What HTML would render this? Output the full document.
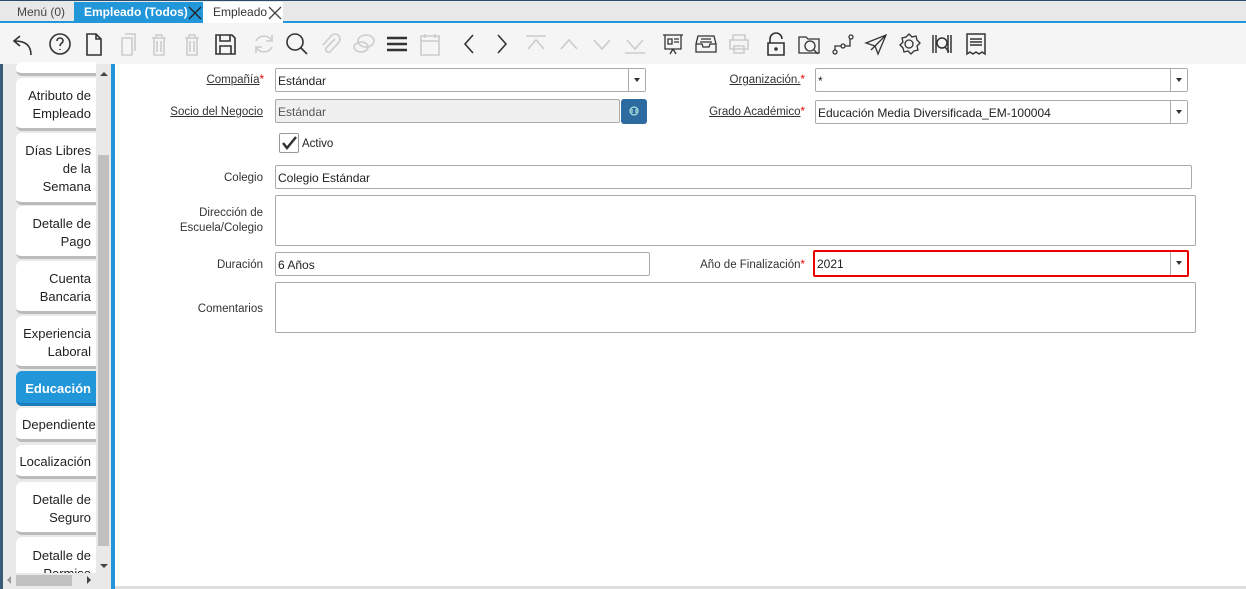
<!DOCTYPE html>
<html><head><meta charset="utf-8"><style>
*{box-sizing:border-box;margin:0;padding:0}
body{width:1246px;height:589px;overflow:hidden;background:#fff;font-family:"Liberation Sans",sans-serif;font-size:12px;color:#222;position:relative}
.abs{position:absolute}
.tabbar{left:0;top:0;width:1246px;height:23px;background:#e8e8e8;border-top:1px solid #2a4a6a;border-bottom:2px solid #2196d8}
.tab{top:3px;height:18px;font-size:12px;line-height:18px;padding-left:10px}
.tb{left:0;top:23px;width:1246px;height:41px;background:#f5f5f5}
.side{left:0;top:64px;width:111px;height:525px;background:#e9e9e9;border-left:3px solid #3a5a7a}
.vline{left:111px;top:64px;width:4px;height:525px;background:#2196d8}
.st{left:16px;width:80px;background:#fff;border-radius:6px 0 0 6px;border-bottom:3px solid #bbb;text-align:right;padding-right:5px;padding-top:3px;font-size:13px;line-height:18px;color:#222;display:flex;flex-direction:column;justify-content:center;align-items:flex-end;overflow:hidden;white-space:nowrap}
.lbl{font-size:11.5px;text-align:right;color:#333}
.u{text-decoration:underline}
.req{color:#e00}
.in{border:1px solid #aaa;background:#fff;font-size:12px;padding-left:2px;padding-top:1px;line-height:22px;border-radius:2px}
.dd{position:absolute;right:0;top:0;width:17px;height:100%;border-left:1px solid #aaa;background:#fff}
.dd:after{content:"";position:absolute;left:5px;top:9px;border-left:3px solid transparent;border-right:3px solid transparent;border-top:4px solid #333}
svg.i{position:absolute;top:31px;width:26px;height:26px;fill:none;stroke:#333;stroke-width:1.6}
.g{stroke:#ccc!important}
</style></head><body>
<div class="abs tabbar"></div>
<div class="abs tab" style="left:7px;width:66px;background:#e8e8e8;color:#444">Menú (0)</div>
<div class="abs tab" style="left:74px;width:129px;top:2px;height:21px;background:#2196d8;color:#fff;font-weight:bold;line-height:20px">Empleado (Todos)</div>
<svg class="abs" style="left:188px;top:6px" width="14" height="14"><path d="M1 1L13 13M13 1L1 13" stroke="#222" stroke-width="1.3"/></svg>
<div class="abs tab" style="left:203px;width:80px;top:2px;height:21px;background:#fff;color:#333;line-height:20px">Empleado</div>
<svg class="abs" style="left:268px;top:6px" width="14" height="14"><path d="M1 1L13 13M13 1L1 13" stroke="#444" stroke-width="1.3"/></svg>
<div class="abs tb"></div>
<svg class="i" style="left:9px"><path d="M22 24C22 14 16 10 6 10M11 5L5 10L11 15"/></svg>
<svg class="i" style="left:47px"><circle cx="13" cy="13" r="10"/><path d="M10 10c0-4 6-4 6 0c0 2-3 2-3 5M13 18v1"/></svg>
<svg class="i" style="left:81px"><path d="M6 3h9l5 5v16H6zM15 3v5h5"/></svg>
<svg class="i g" style="left:114px"><path d="M8 7h10v17H8zM11 3h10v17"/></svg>
<svg class="i g" style="left:146px"><path d="M6 7h14M10 7V4h6v3M8 7v17h10V7M11 10v11M15 10v11"/></svg>
<svg class="i g" style="left:179px"><path d="M6 7h14M10 7V4h6v3M8 7v17h10V7M11 10v11M15 10v11"/></svg>
<svg class="i" style="left:212px"><path d="M4 4h16l3 3v16H4zM8 4v6h10V4M8 23v-8h11v8"/></svg>
<svg class="i g" style="left:251px"><path d="M21 10a9 9 0 0 0-16 0M5 16a9 9 0 0 0 16 0M21 4v6h-6M5 22v-6h6"/></svg>
<svg class="i" style="left:284px"><circle cx="11" cy="11" r="8"/><path d="M17 17l6 6"/></svg>
<svg class="i g" style="left:317px"><path d="M18 8L9 17a3 3 0 0 0 4 4l9-10a5 5 0 0 0-7-7L6 14"/></svg>
<svg class="i g" style="left:351px"><ellipse cx="15" cy="10" rx="8" ry="6"/><ellipse cx="10" cy="16" rx="7" ry="5"/></svg>
<svg class="i" style="left:384px;stroke-width:2.5"><path d="M3 7h20M3 13h20M3 19h20"/></svg>
<svg class="i g" style="left:417px"><path d="M4 5h18v19H4zM4 10h18M8 3v4M18 3v4"/></svg>
<svg class="i" style="left:456px"><path d="M17 4L9 13l8 9"/></svg>
<svg class="i" style="left:489px"><path d="M9 4l8 9-8 9"/></svg>
<svg class="i g" style="left:523px"><path d="M3 5h20M5 18l8-9 8 9"/></svg>
<svg class="i g" style="left:556px"><path d="M5 18l8-9 8 9"/></svg>
<svg class="i g" style="left:589px"><path d="M5 9l8 9 8-9"/></svg>
<svg class="i g" style="left:622px"><path d="M3 22h20M5 9l8 9 8-9"/></svg>
<svg class="i" style="left:660px;stroke-width:1.3"><path d="M3 4h20M5 4v14h16V4M8 8h4v5H8zM14 8h5M14 11h5M13 18l-3 5M13 18l3 5"/></svg>
<svg class="i" style="left:693px;stroke-width:1.3"><path d="M5 5h16l2 8v8H3v-8zM3 13h6l1 3h6l1-3h6M8 8h10M7 11h12"/></svg>
<svg class="i g" style="left:726px"><path d="M7 9V4h12v5M4 9h18v9H4zM8 15h10v7H8z"/></svg>
<svg class="i" style="left:763px"><path d="M7 12V8a6 6 0 0 1 12 0M5 12h16v12H5z"/><circle cx="13" cy="18" r="1"/></svg>
<svg class="i" style="left:796px;stroke-width:1.3"><path d="M3 6h7l2 2h11v14H3z"/><circle cx="14" cy="15" r="5"/><path d="M18 19l4 4"/></svg>
<svg class="i" style="left:830px;stroke-width:1.3"><circle cx="5" cy="21" r="2"/><circle cx="13" cy="15" r="2"/><circle cx="21" cy="6" r="2"/><path d="M5 19v-4h6M15 15h5V8"/></svg>
<svg class="i" style="left:863px;stroke-width:1.3"><path d="M3 12L23 4 15 23 12 15zM12 15l11-11M8 19l4-4"/></svg>
<svg class="i" style="left:896px;stroke-width:1.3"><circle cx="13" cy="13" r="4"/><path d="M13 3l3 3 4-1 1 4 3 3-3 3 1 4-4 1-3 3-3-3-4 1-1-4-3-3 3-3-1-4 4-1z"/></svg>
<svg class="i" style="left:929px;stroke-width:1.5"><path d="M4 4v18M7 4v18M22 4v18M19 4v18"/><circle cx="13" cy="12" r="5"/><path d="M16 16l4 5"/></svg>
<svg class="i" style="left:963px;stroke-width:1.5"><path d="M4 3h18v20l-3-2-3 2-3-2-3 2-3-2-3 2zM7 8h12M7 11h12M7 14h12"/></svg>

<div class="abs side"></div>
<div class="abs" style="left:96px;top:64px;width:15px;height:508px;background:#e9e9e9"></div>
<div class="abs" style="left:98px;top:155px;width:11px;height:391px;background:#c0c0c0"></div>
<div class="abs" style="left:100px;top:72px;border-left:4px solid transparent;border-right:4px solid transparent;border-bottom:4px solid #444"></div>
<div class="abs" style="left:100px;top:564px;border-left:4px solid transparent;border-right:4px solid transparent;border-top:4px solid #444"></div>
<div class="abs" style="left:3px;top:572px;width:108px;height:17px;background:#e9e9e9"></div>
<div class="abs" style="left:16px;top:575px;width:56px;height:11px;background:#c0c0c0"></div>
<div class="abs" style="left:7px;top:576px;border-top:4px solid transparent;border-bottom:4px solid transparent;border-right:4px solid #999"></div>
<div class="abs" style="left:87px;top:576px;border-top:4px solid transparent;border-bottom:4px solid transparent;border-left:4px solid #444"></div>
<div class="abs st" style="top:62px;height:14px"></div>
<div class="abs st" style="top:78px;height:53px">Atributo de<br>Empleado</div>
<div class="abs st" style="top:133px;height:72px">Días Libres<br>de la<br>Semana</div>
<div class="abs st" style="top:206px;height:53px">Detalle de<br>Pago</div>
<div class="abs st" style="top:261px;height:53px">Cuenta<br>Bancaria</div>
<div class="abs st" style="top:316px;height:53px">Experiencia<br>Laboral</div>
<div class="abs st" style="top:371px;height:35px;background:#2196d8;color:#fff;font-weight:bold;border-bottom-color:#1a7dbd">Educación</div>
<div class="abs st" style="top:408px;height:34px;align-items:flex-start;padding-left:6px">Dependientes</div>
<div class="abs st" style="top:445px;height:34px">Localización</div>
<div class="abs st" style="top:482px;height:53px">Detalle de<br>Seguro</div>
<div class="abs st" style="top:537px;height:36px;justify-content:flex-start;padding-top:10px;border-bottom:none;border-radius:6px 0 0 0">Detalle de<br>Permiso</div>
<div class="abs vline"></div>
<div class="abs" style="left:115px;top:586px;width:1131px;height:3px;background:#ddd"></div>

<div class="abs lbl" style="left:140px;top:74px;width:124px"><span class="u">Compañía</span><span class="req">*</span></div>
<div class="abs in" style="left:275px;top:68px;width:371px;height:24px">Estándar<div class="dd"></div></div>
<div class="abs lbl" style="left:620px;top:74px;width:185px"><span class="u">Organización.</span><span class="req">*</span></div>
<div class="abs in" style="left:815px;top:68px;width:373px;height:24px">*<div class="dd"></div></div>
<div class="abs lbl" style="left:140px;top:106px;width:123px"><span class="u">Socio del Negocio</span></div>
<div class="abs in" style="left:275px;top:99px;width:345px;height:24px;background:#f0f0f0;color:#555">Estándar</div>
<div class="abs" style="left:621px;top:99px;width:26px;height:25px;background:#2c6aa0;border-radius:3px"><svg width="26" height="25"><circle cx="13" cy="12" r="4" fill="none" stroke="#cfe" stroke-width="1"/><path d="M11 10v4M15 10v4" stroke="#cfe"/></svg></div>
<div class="abs lbl" style="left:620px;top:106px;width:185px"><span class="u">Grado Académico</span><span class="req">*</span></div>
<div class="abs in" style="left:815px;top:100px;width:373px;height:24px">Educación Media Diversificada_EM-100004<div class="dd"></div></div>
<div class="abs" style="left:279px;top:133px;width:20px;height:20px;border:1px solid #999;border-radius:2px;background:#fff"><svg width="18" height="18"><path d="M3 9l4 5 9-11" fill="none" stroke="#333" stroke-width="2.5"/></svg></div>
<div class="abs" style="left:302px;top:138px;font-size:11.5px">Activo</div>
<div class="abs lbl" style="left:140px;top:172px;width:123px">Colegio</div>
<div class="abs in" style="left:275px;top:165px;width:917px;height:24px">Colegio Estándar</div>
<div class="abs lbl" style="left:140px;top:206px;width:123px;line-height:15px">Dirección de<br>Escuela/Colegio</div>
<div class="abs in" style="left:275px;top:195px;width:921px;height:51px"></div>
<div class="abs lbl" style="left:140px;top:259px;width:123px">Duración</div>
<div class="abs in" style="left:275px;top:252px;width:375px;height:24px">6 Años</div>
<div class="abs lbl" style="left:620px;top:259px;width:185px">Año de Finalización<span class="req">*</span></div>
<div class="abs in" style="left:813px;top:250px;width:376px;height:27px;border:2px solid #e00;line-height:23px">2021<div class="dd" style="border-left-color:#aaa"></div></div>
<div class="abs lbl" style="left:140px;top:303px;width:123px">Comentarios</div>
<div class="abs in" style="left:275px;top:282px;width:921px;height:51px"></div>
</body></html>
